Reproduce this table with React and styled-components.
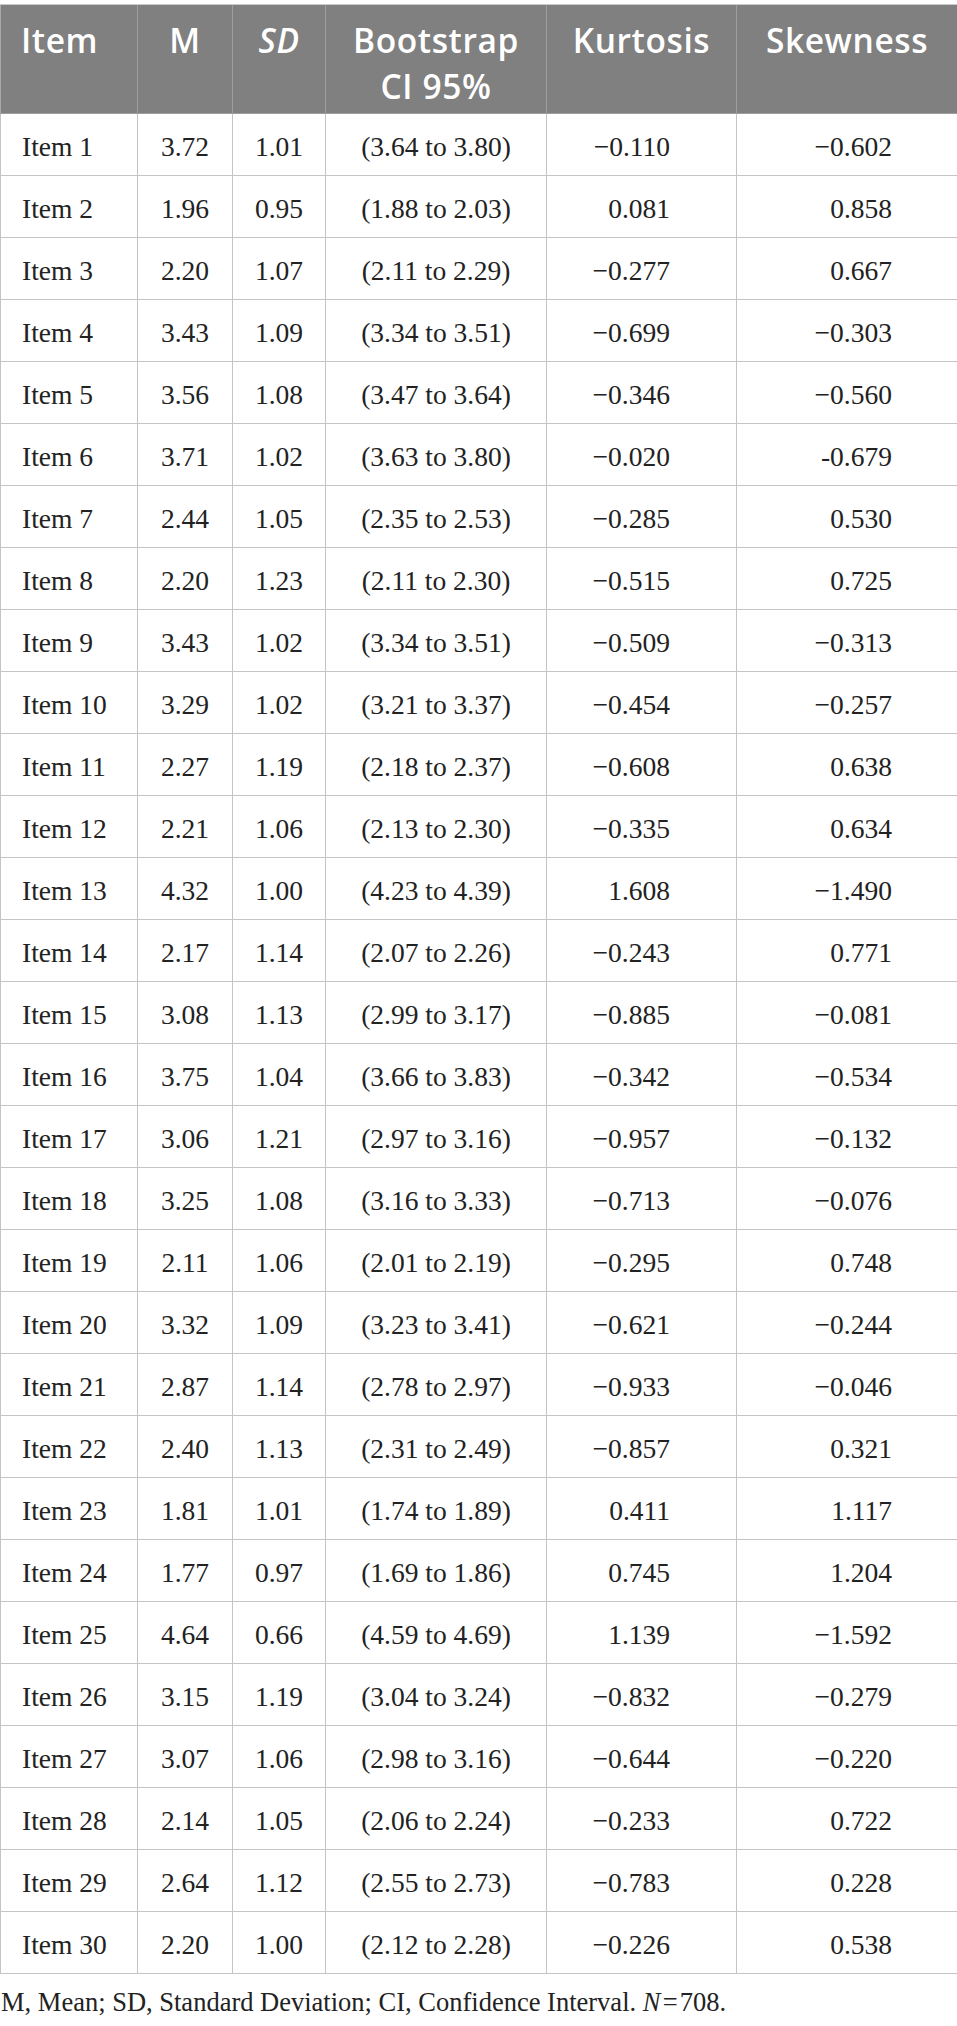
import React from 'react';
import styled, { createGlobalStyle } from 'styled-components';

const GlobalStyle = createGlobalStyle`
  html, body {
    margin: 0;
    padding: 0;
    background: #ffffff;
  }
`;

const rows = [
  ['Item 1', '3.72', '1.01', '(3.64 to 3.80)', '−0.110', '−0.602'],
  ['Item 2', '1.96', '0.95', '(1.88 to 2.03)', '0.081', '0.858'],
  ['Item 3', '2.20', '1.07', '(2.11 to 2.29)', '−0.277', '0.667'],
  ['Item 4', '3.43', '1.09', '(3.34 to 3.51)', '−0.699', '−0.303'],
  ['Item 5', '3.56', '1.08', '(3.47 to 3.64)', '−0.346', '−0.560'],
  ['Item 6', '3.71', '1.02', '(3.63 to 3.80)', '−0.020', '-0.679'],
  ['Item 7', '2.44', '1.05', '(2.35 to 2.53)', '−0.285', '0.530'],
  ['Item 8', '2.20', '1.23', '(2.11 to 2.30)', '−0.515', '0.725'],
  ['Item 9', '3.43', '1.02', '(3.34 to 3.51)', '−0.509', '−0.313'],
  ['Item 10', '3.29', '1.02', '(3.21 to 3.37)', '−0.454', '−0.257'],
  ['Item 11', '2.27', '1.19', '(2.18 to 2.37)', '−0.608', '0.638'],
  ['Item 12', '2.21', '1.06', '(2.13 to 2.30)', '−0.335', '0.634'],
  ['Item 13', '4.32', '1.00', '(4.23 to 4.39)', '1.608', '−1.490'],
  ['Item 14', '2.17', '1.14', '(2.07 to 2.26)', '−0.243', '0.771'],
  ['Item 15', '3.08', '1.13', '(2.99 to 3.17)', '−0.885', '−0.081'],
  ['Item 16', '3.75', '1.04', '(3.66 to 3.83)', '−0.342', '−0.534'],
  ['Item 17', '3.06', '1.21', '(2.97 to 3.16)', '−0.957', '−0.132'],
  ['Item 18', '3.25', '1.08', '(3.16 to 3.33)', '−0.713', '−0.076'],
  ['Item 19', '2.11', '1.06', '(2.01 to 2.19)', '−0.295', '0.748'],
  ['Item 20', '3.32', '1.09', '(3.23 to 3.41)', '−0.621', '−0.244'],
  ['Item 21', '2.87', '1.14', '(2.78 to 2.97)', '−0.933', '−0.046'],
  ['Item 22', '2.40', '1.13', '(2.31 to 2.49)', '−0.857', '0.321'],
  ['Item 23', '1.81', '1.01', '(1.74 to 1.89)', '0.411', '1.117'],
  ['Item 24', '1.77', '0.97', '(1.69 to 1.86)', '0.745', '1.204'],
  ['Item 25', '4.64', '0.66', '(4.59 to 4.69)', '1.139', '−1.592'],
  ['Item 26', '3.15', '1.19', '(3.04 to 3.24)', '−0.832', '−0.279'],
  ['Item 27', '3.07', '1.06', '(2.98 to 3.16)', '−0.644', '−0.220'],
  ['Item 28', '2.14', '1.05', '(2.06 to 2.24)', '−0.233', '0.722'],
  ['Item 29', '2.64', '1.12', '(2.55 to 2.73)', '−0.783', '0.228'],
  ['Item 30', '2.20', '1.00', '(2.12 to 2.28)', '−0.226', '0.538'],
];

// alignment per column: left, center, center, center, right, right
const aligns = ['left', 'center', 'center', 'center', 'right', 'right'];
const padRights = [0, 0, 0, 0, 66, 65];

const Page = styled.div`
  width: 957px;
  padding-top: 4px;
`;

const Table = styled.div`
  border-top: 1px solid #c9c9c9;
  border-bottom: 1px solid #c4c4c4;
`;

const Row = styled.div`
  display: grid;
  grid-template-columns: 138px 95px 93px 221px 190px 220px;
  border-bottom: 1px solid ${p => (p.$head ? '#9d9d9d' : '#c4c4c4')};
  &:last-child {
    border-bottom: none;
  }
`;

const HeadCell = styled.div`
  box-sizing: border-box;
  height: 108px;
  padding: 12px 4px 0;
  padding-left: ${p => (p.$align === 'left' ? '20px' : '4px')};
  background: #808080;
  color: #ffffff;
  font-family: 'Open Sans', 'Noto Sans', sans-serif;
  font-weight: 600;
  font-size: 33.5px;
  letter-spacing: 0.6px;
  line-height: 46px;
  font-style: ${p => (p.$italic ? 'italic' : 'normal')};
  text-align: ${p => p.$align};
  white-space: nowrap;
  border-left: ${p => (p.$first ? '1px solid #a9a9a9' : 'none')};
  border-right: ${p => (p.$last ? 'none' : '1px solid #9d9d9d')};
`;

const Cell = styled.div`
  box-sizing: border-box;
  height: 61px;
  display: flex;
  align-items: center;
  justify-content: ${p =>
    p.$align === 'left' ? 'flex-start' : p.$align === 'right' ? 'flex-end' : 'center'};
  padding: 4px ${p => p.$padRight || 0}px 0 ${p => (p.$align === 'left' ? 21 : 0)}px;
  font-family: 'Liberation Serif', 'Times New Roman', serif;
  font-size: 27.5px;
  color: #222222;
  white-space: nowrap;
  border-left: ${p => (p.$first ? '1px solid #c4c4c4' : 'none')};
  border-right: ${p => (p.$last ? 'none' : '1px solid #c4c4c4')};
`;

const Note = styled.p`
  margin: 13px 0 0 1px;
  font-family: 'Liberation Serif', 'Times New Roman', serif;
  font-size: 26.5px;
  line-height: 1.2;
  color: #222222;
`;

export default function App() {
  return (
    <Page>
      <GlobalStyle />
      <Table>
        <Row $head>
          <HeadCell $align="left" $first>Item</HeadCell>
          <HeadCell $align="center">M</HeadCell>
          <HeadCell $align="center" $italic>SD</HeadCell>
          <HeadCell $align="center">Bootstrap<br />CI 95%</HeadCell>
          <HeadCell $align="center">Kurtosis</HeadCell>
          <HeadCell $align="center" $last>Skewness</HeadCell>
        </Row>
        {rows.map(r => (
          <Row key={r[0]}>
            {r.map((v, i) => (
              <Cell
                key={i}
                $align={aligns[i]}
                $padRight={padRights[i]}
                $first={i === 0}
                $last={i === r.length - 1}
              >
                {v}
              </Cell>
            ))}
          </Row>
        ))}
      </Table>
      <Note>
        M, Mean; SD, Standard Deviation; CI, Confidence Interval. <i>N</i>&#8202;=&#8202;708.
      </Note>
    </Page>
  );
}
